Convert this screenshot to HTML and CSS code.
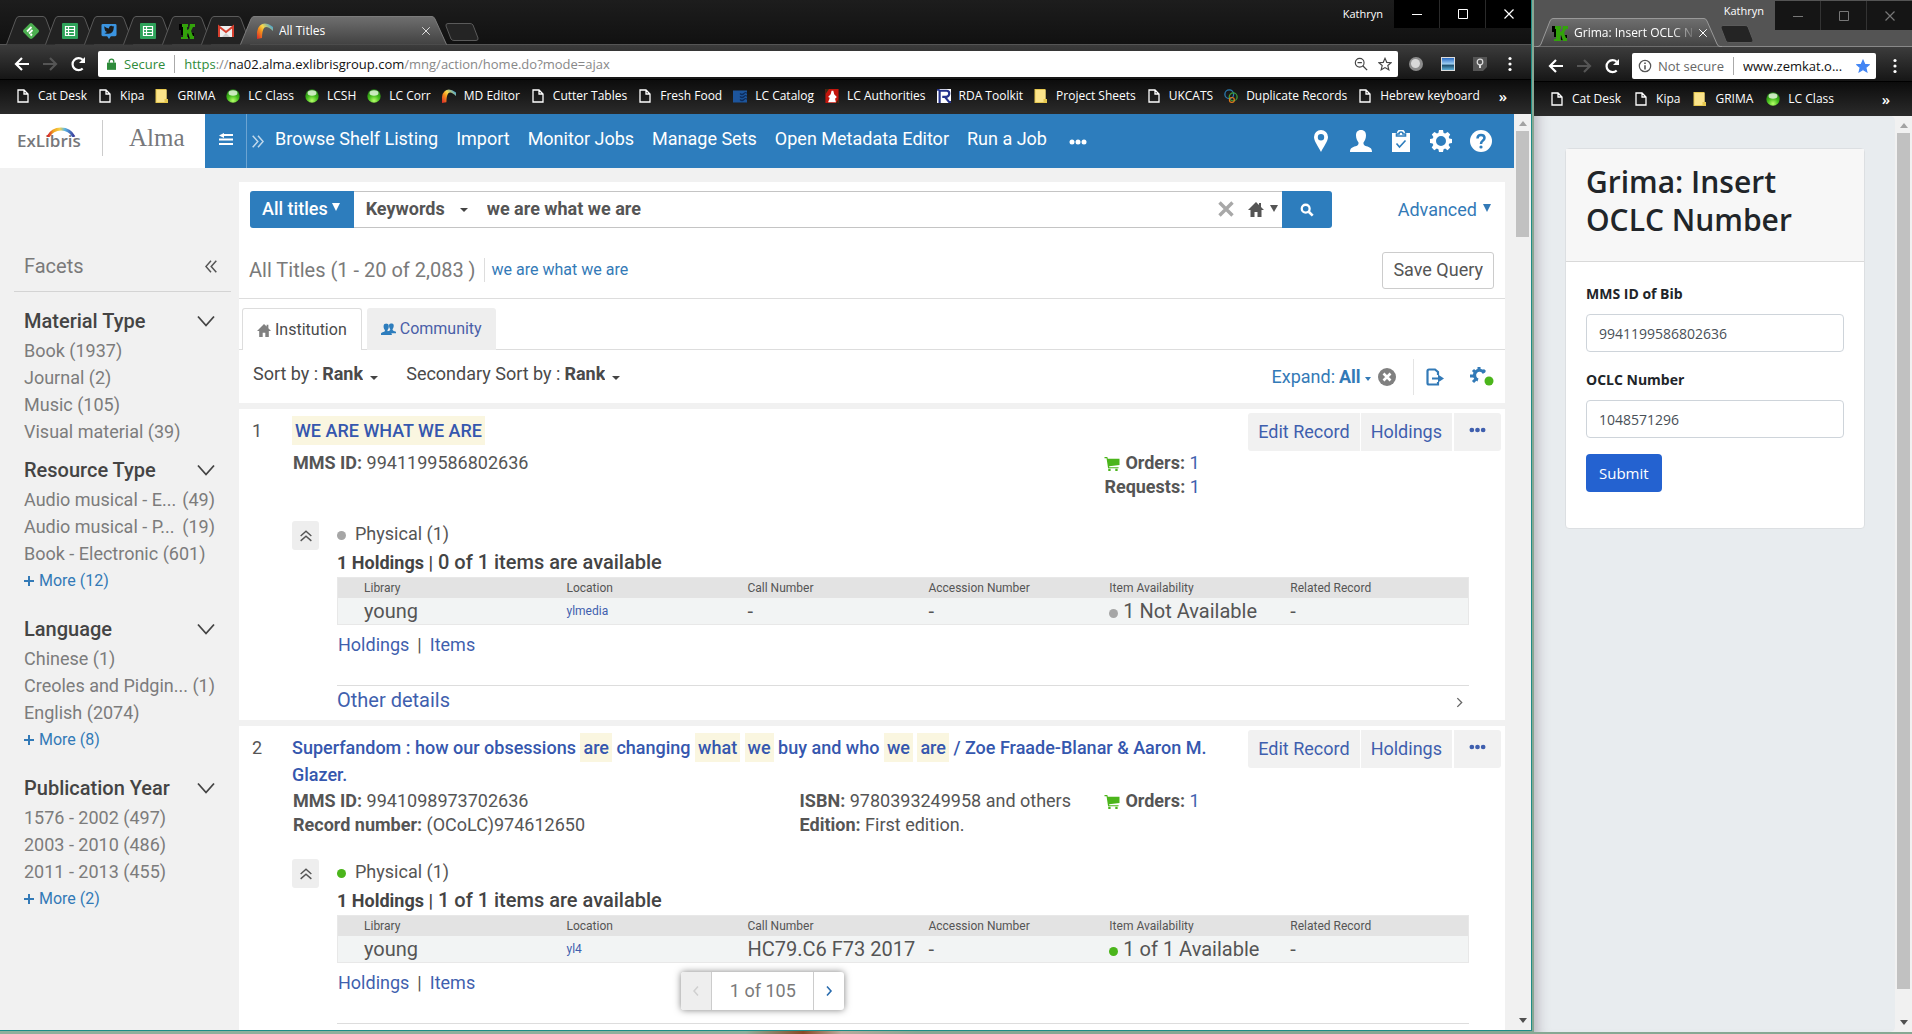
FILE: index.html
```html
<!DOCTYPE html>
<html lang="en">
<head>
<meta charset="utf-8">
<title>All Titles</title>
<link rel="stylesheet" href="styles.css">
</head>
<body>
<svg class="sprite" aria-hidden="true">
  <defs>
    <linearGradient id="tabfill" x1="0" y1="0" x2="0" y2="1"><stop offset="0" stop-color="#6f6f6f"/><stop offset="1" stop-color="#424242"/></linearGradient>
    <linearGradient id="rainbow" gradientUnits="userSpaceOnUse" x1="0" y1="16" x2="16" y2="3"><stop offset="0" stop-color="#d8232a"/><stop offset=".4" stop-color="#f6941b"/><stop offset=".6" stop-color="#f8d84a"/><stop offset="1" stop-color="#3aa0dc"/></linearGradient>
    <linearGradient id="bow"><stop offset="0" stop-color="#d8262c"/><stop offset=".2" stop-color="#f0a01e"/><stop offset=".45" stop-color="#f4d24a"/><stop offset=".65" stop-color="#58b4e4"/><stop offset="1" stop-color="#3b3c9c"/></linearGradient>
    <radialGradient id="orb" cx=".5" cy=".85" r=".8"><stop offset="0" stop-color="#b6ff6a"/><stop offset=".5" stop-color="#45bd1c"/><stop offset="1" stop-color="#1f7a10"/></radialGradient>
    <linearGradient id="shot" x1="0" y1="0" x2="0" y2="1"><stop offset="0" stop-color="#2b6cc4"/><stop offset=".5" stop-color="#9fd0f4"/><stop offset=".6" stop-color="#1e4f6e"/><stop offset="1" stop-color="#5fb0d8"/></linearGradient>
  </defs>
  <symbol id="tab-small" viewBox="0 0 50 29"><path d="M.5 28.5 10 3Q11 .5 13 .5H37Q39 .5 40 3L49.500 28.500" fill="#222" stroke="#5a5a5a"/></symbol>
  <symbol id="tab-left" viewBox="0 0 207 29"><path d="M.5 28.500 11 3Q12 .5 14 .5H192Q194 .5 195 3L206.500 28.500" fill="url(#tabfill)" stroke="#7c7c7c"/></symbol>
  <symbol id="tab-right" viewBox="0 0 186 29"><path d="M0 28.500H2Q4 28.500 5 26L14 3Q15 .5 17 .5H168Q170 .5 171 3L181 26Q182 28.500 184 28.500H186V29H0Z" fill="url(#tabfill)" stroke="#999"/></symbol>
  <symbol id="newtab" viewBox="0 0 34 18"><path d="M3 .5H25Q27 .5 28 2L33 15Q33.500 17.500 31 17.500H9Q7 17.500 6 16L1 3Q.5 .5 3 .5Z" fill="#242424" stroke="#5a5a5a"/></symbol>
  <symbol id="feedly" viewBox="0 0 16 16"><path d="M6.500 .7Q8 -.5 9.500 .7L15.500 6.700Q16.500 8 15.500 9.300L11 14Q9 16 8 16 7 16 5 14L.5 9.300Q-.5 8 .5 6.700Z" fill="#4caf50"/><path d="M4 8.500 8.500 4M6 10.500 9.500 7M7.500 12.500 9 11" stroke="#fff" stroke-width="1.800"/></symbol>
  <symbol id="sheets" viewBox="0 0 16 16"><rect width="16" height="16" rx="1" fill="#2fa35a"/><path d="M3.500 3.500h9v9h-9zM3.500 6.500h9M3.500 9.500h9M6.500 3.500v9" fill="none" stroke="#fff" stroke-width="1.200"/></symbol>
  <symbol id="tweet" viewBox="0 0 16 17"><path d="M1.500 1h13Q16 1 16 2.500v10Q16 14 14.500 14H10l-2 3-2-3H1.500Q0 14 0 12.500v-10Q0 1 1.500 1Z" fill="#3b94e0"/><path d="M3 3.500q2 2.200 5 2.300Q8 3 10.500 3q1 0 1.700.8L13.500 3.400 13 5q0 6-5.500 6.500-2.500.2-4.500-1 2 0 2.800-.9Q4 9 3.800 8 2.800 6 3 3.500Z" fill="#1c1c1c"/></symbol>
  <symbol id="kay" viewBox="0 0 16 16"><path d="M0 1h6v3H4v8H2V7H0zM9 10h6v5H9z" fill="#000"/><path d="M3 1h6v3H8v3l2-1 1-5h5v3h-2l-2 4 2 5h1v3h-4l-2-6-1 1v3h1v2H2v-2h2V4H3z" fill="#33a30b"/></symbol>
  <symbol id="gmail" viewBox="0 0 16 16"><path d="M1 3h14v11H1z" fill="#eee"/><path d="M1 14V3.500L8 9l7-5.500V14" fill="none" stroke="#d7402f" stroke-width="2"/><path d="M4 14 8 10l4 4z" fill="#ccc"/></symbol>
  <symbol id="arc" viewBox="0 0 16 16"><path d="M0 16Q-1 6 3 2.500 8-2 16 4V8Q10 2 7 5 5 8 5 15Z" fill="url(#rainbow)"/></symbol>
  <symbol id="page" viewBox="0 0 12 14"><path d="M1 1h6l4 4v8H1zM7 1v4h4" fill="none" stroke="#fff" stroke-width="1.300"/></symbol>
  <symbol id="note" viewBox="0 0 13 14"><path d="M0 0h11v10h1.500v4H0z" fill="#e6c84f"/><path d="M1 1h10v9H9v3H1z" fill="#fbe48b"/></symbol>
  <symbol id="ball" viewBox="0 0 14 14"><circle cx="7" cy="7" r="6.700" fill="url(#orb)"/><ellipse cx="7" cy="4" rx="4.500" ry="2.800" fill="#e4f7dc" opacity=".85"/></symbol>
  <symbol id="flag" viewBox="0 0 14 13"><path d="M0 1h14v12H0z" fill="#1d559c"/><path d="M7 4q2 2 4 0t3 0M7 7q2 2 4 0t3 0M7 10q2 2 4 0t3 0" fill="none" stroke="#0d2c5c" stroke-width="1.200"/></symbol>
  <symbol id="auth" viewBox="0 0 15 16"><path d="M0 0h15v16H0z" fill="#c3160d"/><path d="M0 0h4L0 6zM15 16v-5l-3 5z" fill="#3c2a10"/><path d="M7 2h2l1 4 3 3-2 2 1 4H3l2-5-2-1 3-3z" fill="#fff"/></symbol>
  <symbol id="rda" viewBox="0 0 16 16"><path d="M0 0h16v16H0z" fill="#fff"/><path d="M3 16V2h8q3 0 3 3t-3 4H6M9 9l5 6h2" fill="none" stroke="#25338c" stroke-width="2.500"/><path d="M0 0h3v2H0z" fill="#25338c"/></symbol>
  <symbol id="rings" viewBox="0 0 16 16"><circle cx="6" cy="6" r="5" fill="none" stroke="#2a7ab0" stroke-width="1.500"/><circle cx="10.500" cy="9" r="4.500" fill="none" stroke="#3d9b3a" stroke-width="1.500"/><circle cx="9" cy="12.500" r="2.800" fill="none" stroke="#e07b1c" stroke-width="1.400"/></symbol>
  <symbol id="back" viewBox="0 0 16 16"><path d="M15 8H2M8 2 2 8l6 6" fill="none" stroke="currentColor" stroke-width="2.200"/></symbol>
  <symbol id="reload" viewBox="0 0 16 16"><path d="M12.700 12.500A6 6 0 1 1 12.700 3.800" fill="none" stroke="#fff" stroke-width="2.200"/><path d="M15 1v6H9z" fill="#fff"/></symbol>
  <symbol id="kebab" viewBox="0 0 4 16"><circle cx="2" cy="2.500" r="1.600" fill="#fff"/><circle cx="2" cy="8" r="1.600" fill="#fff"/><circle cx="2" cy="13.500" r="1.600" fill="#fff"/></symbol>
  <symbol id="lock" viewBox="0 0 10 13"><path d="M0 5h10v8H0z" fill="#2e8b3a"/><path d="M2.500 5V3.500a2.500 2.500 0 0 1 5 0V5" fill="none" stroke="#2e8b3a" stroke-width="1.500"/></symbol>
  <symbol id="star" viewBox="0 0 16 16"><path d="m8 1.500 2 4.600 5 .4-3.800 3.300 1.200 4.900L8 12.100l-4.400 2.600 1.200-4.900L1 6.500l5-.4z" stroke="currentColor" stroke-width="1.300"/></symbol>
  <symbol id="win-min" viewBox="0 0 12 12"><path d="M1 6.500h10" stroke="currentColor"/></symbol>
  <symbol id="win-max" viewBox="0 0 12 12"><path d="M1.500 1.500h9v9h-9z" fill="none" stroke="currentColor"/></symbol>
  <symbol id="cross" viewBox="0 0 12 12"><path d="m1.500 1.500 9 9m0-9-9 9" stroke="currentColor" stroke-width="1.200"/></symbol>
  <symbol id="house" viewBox="0 0 16 16"><path d="M8 1 0 9h2.500v7h4v-5h3v5h4V9H16l-3-3V2h-2v2z" fill="currentColor"/></symbol>
  <symbol id="person" viewBox="0 0 22 22"><path d="M11 0c3.500 0 5 2.300 5 5.500S14.500 11 13.500 12.500c-.3 2 .5 3 3 3.800 3 1 5.500 1.500 5.500 5.700H0c0-4.200 2.500-4.700 5.500-5.700 2.500-.8 3.300-1.800 3-3.800C7.500 11 6 8.700 6 5.500S7.500 0 11 0Z" fill="currentColor"/></symbol>
  <symbol id="gear" viewBox="0 0 22 22"><path d="M9 0h4l.6 2.900 1.600.7L17.700 2l2.500 2.500-1.500 2.600.6 1.500L22 9v4l-2.700.6-.7 1.500 1.600 2.500-2.600 2.600-2.500-1.600-1.500.7L13 22H9l-.6-2.700-1.600-.7-2.500 1.600-2.600-2.600 1.600-2.500-.6-1.500L0 13V9l2.700-.5.700-1.500L1.800 4.500 4.400 1.900l2.500 1.600 1.500-.6zM11 6a5 5 0 1 0 0 10 5 5 0 0 0 0-10Z" fill="currentColor" fill-rule="evenodd"/></symbol>
  <symbol id="chevdown" viewBox="0 0 18 12"><path d="m1 1.500 8 9 8-9" fill="none" stroke="#444" stroke-width="1.800"/></symbol>
  <symbol id="dblleft" viewBox="0 0 12 13"><path d="M6 .7.900 6.500 6 12.300M11.300.7 6.200 6.500l5.100 5.800" fill="none" stroke="currentColor" stroke-width="1.500"/></symbol>
  <symbol id="cart" viewBox="0 0 16 16"><path d="M0 1h3l.5 2H16v6.500L5 11v1h10v1H3.800L2.200 2.500H0z" fill="#4bb51b"/><path d="M4 13.500h2.500V16H4zM11.500 13.500H14V16h-2.500z" fill="#4bb51b"/></symbol>
  <symbol id="dots" viewBox="0 0 18 6"><circle cx="3" cy="3" r="2.500" fill="currentColor"/><circle cx="9" cy="3" r="2.500" fill="currentColor"/><circle cx="15" cy="3" r="2.500" fill="currentColor"/></symbol>
  <symbol id="up" viewBox="0 0 8 5"><path d="M4 0 8 5H0z" fill="#a3a3a3"/></symbol>
  <symbol id="down" viewBox="0 0 8 5"><path d="M0 0h8L4 5z" fill="#505050"/></symbol>
</svg>

<div class="desktop">
<section class="window window-main">
  <header class="strip">
    <div class="tabs">
      <button class="tab" aria-label="Feedly"><svg class="tab-shape"><use href="#tab-small"/></svg><svg class="fav"><use href="#feedly"/></svg></button>
      <button class="tab" aria-label="Sheets"><svg class="tab-shape"><use href="#tab-small"/></svg><svg class="fav"><use href="#sheets"/></svg></button>
      <button class="tab" aria-label="TweetDeck"><svg class="tab-shape"><use href="#tab-small"/></svg><svg class="fav"><use href="#tweet"/></svg></button>
      <button class="tab" aria-label="Sheets"><svg class="tab-shape"><use href="#tab-small"/></svg><svg class="fav"><use href="#sheets"/></svg></button>
      <button class="tab" aria-label="Grima"><svg class="tab-shape"><use href="#tab-small"/></svg><svg class="fav"><use href="#kay"/></svg></button>
      <button class="tab" aria-label="Gmail"><svg class="tab-shape"><use href="#tab-small"/></svg><svg class="fav"><use href="#gmail"/></svg></button>
      <div class="tab tab-wide"><svg class="tab-shape"><use href="#tab-left"/></svg><svg class="fav"><use href="#arc"/></svg><span class="tab-title">All Titles</span><svg class="tab-close"><use href="#cross"/></svg></div>
      <button class="newtab" aria-label="New tab"><svg><use href="#newtab"/></svg></button>
    </div>
    <span class="profile">Kathryn</span>
    <div class="controls">
      <button aria-label="Minimize"><svg><use href="#win-min"/></svg></button><button aria-label="Maximize"><svg><use href="#win-max"/></svg></button><button aria-label="Close"><svg><use href="#cross"/></svg></button>
    </div>
  </header>
  <div class="toolbar">
    <button aria-label="Back"><svg><use href="#back"/></svg></button>
    <button aria-label="Forward" class="forward"><svg><use href="#back"/></svg></button>
    <button aria-label="Reload"><svg><use href="#reload"/></svg></button>
    <div class="omnibox">
      <svg class="lock"><use href="#lock"/></svg><span class="secure">Secure</span>
      <span class="url"><span class="scheme">https</span>://<span class="host">na02.alma.exlibrisgroup.com</span>/mng/action/home.do?mode=ajax</span>
      <svg class="omni-icon" viewBox="0 0 16 16"><circle cx="6.500" cy="6.500" r="5" fill="none" stroke="#444" stroke-width="1.300"/><path d="m10 10 5 5M4 6.500h5" stroke="#444" stroke-width="1.500"/></svg>
      <svg class="omni-icon star-empty"><use href="#star"/></svg>
    </div>
    <div class="extensions">
      <svg viewBox="0 0 16 16"><circle cx="8" cy="8" r="7" fill="#8c8c8c"/><circle cx="7.500" cy="7.500" r="4.500" fill="#d8d8d8"/></svg>
      <svg viewBox="0 0 16 16"><path d="M1 1h14v14H1z" fill="#ddd"/><path d="M2 2h12v12H2z" fill="url(#shot)"/></svg>
      <svg viewBox="0 0 16 16"><path d="M1 1h14v10l-4 4H1z" fill="#555"/><circle cx="8" cy="6" r="2.800" fill="none" stroke="#ddd" stroke-width="1.200"/><path d="M7 9h2v3H7z" fill="#ddd"/></svg>
    </div>
    <button aria-label="Menu" class="menu"><svg><use href="#kebab"/></svg></button>
  </div>
  <nav class="bookmarks">
    <a href="#"><svg><use href="#page"/></svg>Cat Desk</a>
    <a href="#"><svg><use href="#page"/></svg>Kipa</a>
    <a href="#"><svg><use href="#note"/></svg>GRIMA</a>
    <a href="#"><svg><use href="#ball"/></svg>LC Class</a>
    <a href="#"><svg><use href="#ball"/></svg>LCSH</a>
    <a href="#"><svg><use href="#ball"/></svg>LC Corr</a>
    <a href="#"><svg><use href="#arc"/></svg>MD Editor</a>
    <a href="#"><svg><use href="#page"/></svg>Cutter Tables</a>
    <a href="#"><svg><use href="#page"/></svg>Fresh Food</a>
    <a href="#"><svg><use href="#flag"/></svg>LC Catalog</a>
    <a href="#"><svg><use href="#auth"/></svg>LC Authorities</a>
    <a href="#"><svg><use href="#rda"/></svg>RDA Toolkit</a>
    <a href="#"><svg><use href="#note"/></svg>Project Sheets</a>
    <a href="#"><svg><use href="#page"/></svg>UKCATS</a>
    <a href="#"><svg><use href="#rings"/></svg>Duplicate Records</a>
    <a href="#"><svg><use href="#page"/></svg>Hebrew keyboard</a>
    <button class="overflow">»</button>
  </nav>

  <div class="viewport">
    <div class="alma">
      <header class="alma-head">
        <div class="brand">
          <div class="exlibris"><svg viewBox="0 0 30 10"><path d="M2 10Q6 2 15 2t13 8" fill="none" stroke="url(#bow)" stroke-width="3"/></svg><span>ExLibris</span></div>
          <span class="product">Alma</span>
        </div>
        <button class="head-menu" aria-label="Menu"><svg viewBox="0 0 14 12"><path d="M5 2h9M0 6.500h14M0 11h14" stroke="#fff" stroke-width="1.800"/><path d="M5 0v5L0 2.500z" fill="#fff"/></svg></button>
        <nav class="head-nav">
          <svg class="dblright"><use href="#dblleft"/></svg>
          <a href="#">Browse Shelf Listing</a><a href="#">Import</a><a href="#">Monitor Jobs</a><a href="#">Manage Sets</a><a href="#">Open Metadata Editor</a><a href="#">Run a Job</a>
          <button class="head-more" aria-label="More"><svg><use href="#dots"/></svg></button>
        </nav>
        <div class="head-icons">
          <button aria-label="Location"><svg viewBox="0 0 22 22"><path d="M11 0a7 7 0 0 1 7 7c0 4-4 9-7 15C8 16 4 11 4 7a7 7 0 0 1 7-7Zm0 4a3.200 3.200 0 1 0 0 6.400A3.200 3.200 0 0 0 11 4Z" fill="#fff" fill-rule="evenodd"/></svg></button>
          <button aria-label="User"><svg><use href="#person"/></svg></button>
          <button aria-label="Tasks"><svg viewBox="0 0 22 22"><path d="M2 3h5a4 3.500 0 0 1 8 0h5v19H2z" fill="#fff"/><path d="M6.500 6h9V4H13a2 2 0 0 0-4 0H6.500zM6.500 13.500l3 3.500 6-6.500" fill="none" stroke="#2d7dbd" stroke-width="1.600"/></svg></button>
          <button aria-label="Settings"><svg><use href="#gear"/></svg></button>
          <button aria-label="Help"><svg viewBox="0 0 22 22"><circle cx="11" cy="11" r="11" fill="#fff"/><path d="M7.500 8.500q0-3.500 3.500-3.500t3.500 3q0 1.500-1.800 2.700T11 14" fill="none" stroke="#2d7dbd" stroke-width="2.500"/><circle cx="11" cy="17" r="1.600" fill="#2d7dbd"/></svg></button>
        </div>
      </header>
      <div class="alma-body">
        <aside class="facets">
          <div class="facets-head"><span>Facets</span><button aria-label="Collapse"><svg><use href="#dblleft"/></svg></button></div>
          <section><h3>Material Type<svg><use href="#chevdown"/></svg></h3>
            <ul><li><a href="#">Book</a> (1937)</li><li><a href="#">Journal</a> (2)</li><li><a href="#">Music</a> (105)</li><li><a href="#">Visual material</a> (39)</li></ul></section>
          <section><h3>Resource Type<svg><use href="#chevdown"/></svg></h3>
            <ul><li class="cut"><a href="#">Audio musical - E...</a><span>(49)</span></li><li class="cut"><a href="#">Audio musical - P...</a><span>(19)</span></li><li><a href="#">Book - Electronic</a> (601)</li></ul>
            <a class="more" href="#"><svg viewBox="0 0 10 10"><path d="M5 0v10M0 5h10" stroke="currentColor" stroke-width="2"/></svg>More (12)</a></section>
          <section><h3>Language<svg><use href="#chevdown"/></svg></h3>
            <ul><li><a href="#">Chinese</a> (1)</li><li class="cut"><a href="#">Creoles and Pidgin...</a><span>(1)</span></li><li><a href="#">English</a> (2074)</li></ul>
            <a class="more" href="#"><svg viewBox="0 0 10 10"><path d="M5 0v10M0 5h10" stroke="currentColor" stroke-width="2"/></svg>More (8)</a></section>
          <section><h3>Publication Year<svg><use href="#chevdown"/></svg></h3>
            <ul><li><a href="#">1576 - 2002</a> (497)</li><li><a href="#">2003 - 2010</a> (486)</li><li><a href="#">2011 - 2013</a> (455)</li></ul>
            <a class="more" href="#"><svg viewBox="0 0 10 10"><path d="M5 0v10M0 5h10" stroke="currentColor" stroke-width="2"/></svg>More (2)</a></section>
        </aside>
        <main class="results">
          <div class="panel">
            <form class="search">
              <button type="button" class="scope">All titles<i class="tri"></i></button>
              <div class="search-box">
                <label class="pick"><select aria-label="Search field"><option>Keywords</option></select><i class="caret"></i></label>
                <input type="text" aria-label="Search" value="we are what we are">
                <button type="button" class="clear" aria-label="Clear"><svg viewBox="0 0 16 16"><path d="m1.500 1.500 13 13m0-13-13 13" stroke="#a8a8a8" stroke-width="3.400"/></svg></button>
                <button type="button" class="home" aria-label="Institution"><svg><use href="#house"/></svg><i class="tri"></i></button>
              </div>
              <button type="submit" class="go" aria-label="Search"><svg viewBox="0 0 16 16"><circle cx="6.500" cy="6.500" r="4.500" fill="none" stroke="#fff" stroke-width="2.600"/><path d="m10 10 4.500 4.500" stroke="#fff" stroke-width="3"/></svg></button>
              <a href="#" class="advanced">Advanced<i class="tri"></i></a>
            </form>
            <div class="summary">
              <h1>All Titles (1 - 20 of 2,083 )</h1><a href="#">we are what we are</a>
              <button class="save">Save Query</button>
            </div>
            <div class="result-tabs">
              <button class="current"><svg><use href="#house"/></svg>Institution</button>
              <button><svg viewBox="0 0 26 22"><use href="#person" width="18" height="18" x="9" y="1"/><use href="#person" width="20" height="21" x="-1" y="1"/></svg>Community</button>
            </div>
            <div class="sorting">
              <label class="pick">Sort by :<select><option>Rank</option></select><i class="caret low"></i></label>
              <label class="pick">Secondary Sort by :<select><option>Rank</option></select><i class="caret low"></i></label>
              <div class="tools">
                <label class="pick expand">Expand:<select><option>All</option></select><i class="caret"></i></label>
                <button aria-label="Clear"><svg viewBox="0 0 18 18"><circle cx="9" cy="9" r="9" fill="#808080"/><path d="m5.500 5.500 7 7m0-7-7 7" stroke="#fff" stroke-width="2.600"/></svg></button>
                <button aria-label="Export" class="export"><svg viewBox="0 0 18 18"><path d="M12 7V4L9 1.500H3q-1.500 0-1.500 1.500v12q0 1.500 1.500 1.500h9V14" fill="none" stroke="#337ab7" stroke-width="2.200"/><path d="M6 9.500h6V6.500l6 4-6 4v-3H6z" fill="#337ab7"/></svg></button>
                <button aria-label="Settings" class="cog"><svg viewBox="0 0 24 20"><path d="M8 13A5 5 0 1 1 14 6" fill="none" stroke="#337ab7" stroke-width="3.200"/><path d="M9 0v4M3 3l2.500 2.500M0 9h4M3 15l2.500-2.500M15 3l-2.500 2.500" stroke="#337ab7" stroke-width="3"/><circle cx="19" cy="14" r="4.500" fill="#4bb51b"/></svg></button>
              </div>
            </div>
          </div>

          <article class="record">
            <span class="num">1</span>
            <h2><a href="#"><mark>WE ARE WHAT WE ARE</mark></a></h2>
            <div class="actions"><button>Edit Record</button><button>Holdings</button><button aria-label="More actions" class="dots"><svg><use href="#dots"/></svg></button></div>
            <div class="meta">
              <div><p><b>MMS ID:</b> 9941199586802636</p></div>
              <div></div>
              <div><p><svg><use href="#cart"/></svg><b>Orders:</b> <a href="#">1</a></p><p><b>Requests:</b> <a href="#">1</a></p></div>
            </div>
            <div class="details">
              <button class="toggle" aria-label="Collapse"><svg><use href="#dblleft"/></svg></button>
              <div class="holdings">
                <p class="physical"><i class="dot"></i>Physical (1)</p>
                <p class="avail"><span>1 Holdings |</span> 0 of 1 items are available</p>
                <table>
                  <thead><tr><th>Library</th><th>Location</th><th>Call Number</th><th>Accession Number</th><th>Item Availability</th><th>Related Record</th></tr></thead>
                  <tbody><tr><td>young</td><td><a href="#">ylmedia</a></td><td>-</td><td>-</td><td><i class="dot"></i>1 Not Available</td><td>-</td></tr></tbody>
                </table>
                <p class="links"><a href="#">Holdings</a><span>|</span><a href="#">Items</a></p>
                <a class="other" href="#">Other details<svg viewBox="0 0 8 12"><path d="m1.500 1 5 5-5 5" fill="none" stroke="#666" stroke-width="1.500"/></svg></a>
              </div>
            </div>
          </article>

          <article class="record">
            <span class="num">2</span>
            <h2><a href="#">Superfandom : how our obsessions <mark>are</mark> changing <mark>what</mark> <mark>we</mark> buy and who <mark>we</mark> <mark>are</mark> / Zoe Fraade-Blanar &amp; Aaron M. Glazer.</a></h2>
            <div class="actions"><button>Edit Record</button><button>Holdings</button><button aria-label="More actions" class="dots"><svg><use href="#dots"/></svg></button></div>
            <div class="meta">
              <div><p><b>MMS ID:</b> 9941098973702636</p><p><b>Record number:</b> (OCoLC)974612650</p></div>
              <div><p><b>ISBN:</b> 9780393249958 and others</p><p><b>Edition:</b> First edition.</p></div>
              <div><p><svg><use href="#cart"/></svg><b>Orders:</b> <a href="#">1</a></p></div>
            </div>
            <div class="details">
              <button class="toggle" aria-label="Collapse"><svg><use href="#dblleft"/></svg></button>
              <div class="holdings">
                <p class="physical"><i class="dot on"></i>Physical (1)</p>
                <p class="avail"><span>1 Holdings |</span> 1 of 1 items are available</p>
                <table>
                  <thead><tr><th>Library</th><th>Location</th><th>Call Number</th><th>Accession Number</th><th>Item Availability</th><th>Related Record</th></tr></thead>
                  <tbody><tr><td>young</td><td><a href="#">yl4</a></td><td>HC79.C6 F73 2017</td><td>-</td><td><i class="dot on"></i>1 of 1 Available</td><td>-</td></tr></tbody>
                </table>
                <p class="links"><a href="#">Holdings</a><span>|</span><a href="#">Items</a></p>
                <div class="rule"></div>
              </div>
            </div>
          </article>
        </main>
      </div>
      <div class="pager">
        <button disabled aria-label="Previous"><svg viewBox="0 0 8 12"><path d="m6 1.500-4 4.500 4 4.500" fill="none" stroke="#d0d0d0" stroke-width="1.500"/></svg></button>
        <span>1 of 105</span>
        <button aria-label="Next"><svg viewBox="0 0 8 12"><path d="m2 1.500 4 4.500-4 4.500" fill="none" stroke="#2a6cae" stroke-width="1.600"/></svg></button>
      </div>
    </div>
    <div class="scrollbar"><svg><use href="#up"/></svg><div class="track"><div class="thumb"></div></div><svg><use href="#down"/></svg></div>
  </div>
</section>

<section class="window window-side">
  <header class="strip">
    <div class="tabs">
      <div class="tab tab-wide"><svg class="tab-shape"><use href="#tab-right"/></svg><svg class="fav"><use href="#kay"/></svg><span class="tab-title">Grima: Insert OCLC N</span><svg class="tab-close"><use href="#cross"/></svg></div>
      <button class="newtab" aria-label="New tab"><svg><use href="#newtab"/></svg></button>
    </div>
    <span class="profile">Kathryn</span>
    <div class="controls">
      <button aria-label="Minimize"><svg><use href="#win-min"/></svg></button><button aria-label="Maximize"><svg><use href="#win-max"/></svg></button><button aria-label="Close"><svg><use href="#cross"/></svg></button>
    </div>
  </header>
  <div class="toolbar">
    <button aria-label="Back"><svg><use href="#back"/></svg></button>
    <button aria-label="Forward" class="forward"><svg><use href="#back"/></svg></button>
    <button aria-label="Reload"><svg><use href="#reload"/></svg></button>
    <div class="omnibox">
      <svg class="omni-icon" viewBox="0 0 16 16"><circle cx="8" cy="8" r="6.500" fill="none" stroke="#555" stroke-width="1.400"/><path d="M8 7v5M8 4v1.800" stroke="#555" stroke-width="1.800"/></svg><span class="insecure">Not secure</span>
      <input type="text" aria-label="Address" value="www.zemkat.o...">
      <svg class="omni-icon star-full"><use href="#star"/></svg>
    </div>
    <button aria-label="Menu" class="menu"><svg><use href="#kebab"/></svg></button>
  </div>
  <nav class="bookmarks">
    <a href="#"><svg><use href="#page"/></svg>Cat Desk</a>
    <a href="#"><svg><use href="#page"/></svg>Kipa</a>
    <a href="#"><svg><use href="#note"/></svg>GRIMA</a>
    <a href="#"><svg><use href="#ball"/></svg>LC Class</a>
    <button class="overflow">»</button>
  </nav>
  <div class="viewport">
    <div class="grima">
      <div class="card">
        <h1>Grima: Insert OCLC Number</h1>
        <form>
          <label for="mms">MMS ID of Bib</label>
          <input id="mms" type="text" value="9941199586802636">
          <label for="oclc">OCLC Number</label>
          <input id="oclc" type="text" value="1048571296">
          <button type="submit">Submit</button>
        </form>
      </div>
    </div>
    <div class="scrollbar"><svg><use href="#up"/></svg><div class="track"><div class="thumb"></div></div><svg><use href="#down"/></svg></div>
  </div>
</section>
</div>
</body>
</html>
```
FILE: styles.css
```css
* { box-sizing: border-box; }
body { margin: 0; }
h1, h2, h3, p, ul { margin: 0; padding: 0; }
ul { list-style: none; }
a { color: inherit; text-decoration: none; }
button, input, select { font: inherit; color: inherit; border: 0; background: none; padding: 0; margin: 0; border-radius: 0; }
button { cursor: pointer; }
select { appearance: none; outline: 0; }
input { min-width: 0; outline: 0; }
svg { display: block; flex: none; }
.sprite { position: absolute; width: 0; height: 0; }

.desktop {
  display: grid;
  grid-template-columns: minmax(0, 1fr) 378px;
  gap: 2px;
  height: 100vh;
  overflow: hidden;
  background: linear-gradient(90deg, #8fb09c 0 39%, #8a4a26 42%, #b9aa9c 44%, #87a893 48%);
}

/* Browser windows */
.window { display: flex; flex-direction: column; min-height: 0; font: 12px/16px "Open Sans", "Noto Sans", sans-serif; color: #fff; }
.window-main { border: solid #1f8c87; border-width: 0 1px 1px 0; margin-bottom: 3px; }
.window-side { margin-bottom: 2px; }

.strip { display: flex; height: 45px; background: linear-gradient(#1d1d1d, #111); border-bottom: 1px solid #555; flex: none; }
.tabs { display: flex; align-items: flex-end; flex: 1; min-width: 0; padding-left: 6px; margin-bottom: -1px; }
.tab { position: relative; display: flex; align-items: center; justify-content: center; width: 50px; height: 29px; margin-right: -11px; }
.tab-shape { position: absolute; inset: 0; width: 100%; height: 100%; }
.fav { position: relative; width: 16px; height: 16px; }
.tab-wide { width: 207px; justify-content: flex-start; padding: 0 16px 0 17px; gap: 6px; margin-right: -2px; z-index: 1; }
.tab-title { position: relative; flex: 1; white-space: nowrap; overflow: hidden; }
.tab-close { position: relative; width: 10px; height: 10px; color: #ddd; }
.newtab { align-self: flex-end; margin-bottom: 4px; }
.newtab svg { width: 34px; height: 18px; }
.profile { margin: 5px 11px 0 0; font-size: 11px; line-height: 18px; }
.controls { display: flex; gap: 1px; height: 28px; background: #2a2a2a; }
.controls button { width: 45px; display: grid; place-items: center; background: #000; }
.controls svg { width: 12px; height: 12px; }

.toolbar { display: flex; align-items: center; height: 34px; padding: 4px 19px 0 14px; background: linear-gradient(#3c3c3c, #161616); flex: none; }
.toolbar > button { margin-right: 12px; }
.toolbar > button svg { width: 16px; height: 16px; }
.toolbar .forward { transform: scaleX(-1); color: #555; }
.toolbar .menu { margin: 0; }
.toolbar .menu svg { width: 4px; }
.omnibox { flex: 1; min-width: 0; display: flex; align-items: center; height: 26px; margin-right: 10px; padding: 0 6px 0 9px; background: #fff; border-radius: 2px; font-size: 13px; line-height: 18px; color: #888; }
.lock { width: 9px; height: 12px; margin-right: 8px; }
.secure { color: #2e8b3a; padding-right: 9px; border-right: 1px solid #aaa; }
.insecure { color: #666; padding-right: 9px; border-right: 1px solid #aaa; white-space: nowrap; }
.url { flex: 1; padding-left: 9px; white-space: nowrap; }
.scheme { color: #2e8b3a; }
.host { color: #111; }
.omnibox input { flex: 1; width: 0; padding-left: 9px; color: #111; }
.omni-icon { width: 14px; height: 14px; }
.star-empty { color: #444; fill: none; margin-left: 10px; }
.star-full { color: #4285f4; fill: #4285f4; }
.extensions { display: flex; gap: 16px; margin-right: 20px; }
.extensions svg { width: 16px; height: 16px; }

.bookmarks { display: flex; align-items: center; gap: 11px; height: 35px; padding: 0 24px 3px 16px; background: linear-gradient(#0c0c0c, #2b2b2b); border-top: 1px solid #000; white-space: nowrap; flex: none; }
.bookmarks a { display: flex; align-items: center; gap: 8px; }
.bookmarks svg { width: 14px; height: 14px; }
.overflow { margin-left: auto; font-size: 15px; font-weight: 600; }

.viewport { flex: 1; display: flex; min-height: 0; background: #f1f1f1; }
.scrollbar { width: 17px; display: flex; flex-direction: column; align-items: center; padding: 7px 2px; gap: 5px; background: #f1f1f1; flex: none; }
.scrollbar svg { width: 8px; height: 5px; }
.track { flex: 1; width: 100%; }
.thumb { height: 12%; background: #c1c1c1; }

/* Alma */
.alma { position: relative; flex: 1; min-width: 0; overflow: hidden; font: 18px/24px Roboto, sans-serif; color: #555; background: #f1f1f1; }
.alma-head { display: flex; height: 54px; background: #2d7dbd; color: #fff; }
.brand { display: flex; align-items: center; width: 205px; background: #fff; }
.exlibris { position: relative; width: 103px; height: 36px; padding: 9px 0 0 17px; border-right: 1px solid #ccc; color: #77787b; font: 600 17px/24px "Open Sans", sans-serif; margin-top: -6px; }
.exlibris svg { position: absolute; left: 46px; top: 7px; width: 30px; height: 10px; }
.product { margin: -6px 0 0 26px; font: 25px/30px "Liberation Serif", serif; color: #77787b; }
.head-menu { width: 42px; border-right: 1px solid #6ca4d2; display: grid; place-items: center; padding-bottom: 4px; }
.head-menu svg { width: 14px; height: 12px; }
.head-nav { display: flex; align-items: center; gap: 18px; flex: 1; padding: 0 0 4px 5px; white-space: nowrap; }
.dblright { width: 12px; height: 13px; transform: scaleX(-1); opacity: .7; margin: 4px -7px 0 0; }
.head-more { margin: 6px 0 0 4px; }
.head-more svg { width: 18px; height: 6px; }
.head-icons { display: flex; align-items: center; gap: 18px; padding-right: 22px; }
.head-icons svg { width: 22px; height: 22px; }

.alma-body { display: flex; }
.facets { width: 239px; flex: none; padding: 83px 8px 0 14px; color: #7c7c7c; }
.facets-head { display: flex; justify-content: space-between; align-items: center; height: 41px; padding: 0 14px 10px 10px; margin-bottom: 12px; border-bottom: 1px solid #d4d4d4; font-size: 20px; color: #7a7a7a; }
.facets-head svg { width: 12px; height: 13px; color: #555; }
.facets section { padding: 0 16px 0 10px; margin-bottom: 8px; }
.facets h3 { display: flex; justify-content: space-between; align-items: center; height: 33px; font-size: 20px; font-weight: 500; color: #444; white-space: nowrap; }
.facets h3 svg { width: 18px; height: 12px; }
.facets li { line-height: 27px; white-space: nowrap; }
.cut { display: flex; justify-content: space-between; }
.more { display: flex; align-items: center; gap: 5px; line-height: 27px; padding-bottom: 10px; color: #337ab7; font-size: 16px; }
.more svg { width: 10px; height: 10px; }

.results { flex: 1; min-width: 0; margin: 14px 9px 0 0; }
.panel { background: #fff; margin-bottom: 6px; }
.tri { display: inline-block; border: solid transparent; border-width: 8px 4px 0; border-top-color: currentColor; }
.caret { display: inline-block; border: solid transparent; border-width: 4px 4px 0; border-top-color: #444; margin-top: 3px; }
.caret.low { margin-top: 8px; }
.pick { display: flex; align-items: center; gap: 8px; }
.pick select { font-weight: 700; }

.search { display: flex; align-items: center; padding: 9px 14px 0 11px; }
.scope { display: flex; align-items: center; gap: 4px; height: 37px; padding: 0 14px 2px 12px; border-radius: 3px 0 0 3px; background: #2d7dbd; color: #fff; font-weight: 500; white-space: nowrap; }
.scope .tri { margin-top: -4px; }
.search-box { flex: 1; display: flex; align-items: center; height: 37px; border: solid #c4c4c4; border-width: 1px 0; padding: 0 4px 2px 12px; color: #555; }
.search-box .pick { gap: 14px; }
.search-box input { flex: 1; margin-left: 19px; font-weight: 700; }
.clear { margin-right: 14px; }
.clear svg, .home svg { width: 16px; height: 16px; }
.home { display: flex; align-items: center; gap: 6px; }
.home .tri { border-top-width: 7px; }
.go { display: grid; place-items: center; width: 50px; height: 37px; border-radius: 0 3px 3px 0; background: #2d7dbd; }
.go svg { width: 14px; height: 14px; }
.advanced { display: flex; align-items: center; gap: 6px; margin-left: 66px; color: #337ab7; }
.advanced .tri { margin-top: -4px; }

.summary { display: flex; align-items: center; height: 71px; padding: 14px 11px 0 10px; border-bottom: 1px solid #ddd; }
.summary h1 { font-size: 20px; font-weight: 400; color: #7a7a7a; padding-right: 8px; border-right: 1px solid #ddd; }
.summary a { margin-left: 7px; font-size: 16px; color: #337ab7; }
.save { margin-left: auto; height: 37px; padding: 0 10px; border: 1px solid #ccc; border-radius: 3px; }

.result-tabs { display: flex; align-items: flex-end; gap: 5px; height: 51px; padding-left: 3px; box-shadow: inset 0 -1px #ddd; font-size: 16px; }
.result-tabs button { display: flex; align-items: center; gap: 4px; height: 42px; padding: 0 14px; border-radius: 3px 3px 0 0; background: #eee; color: #4a5fa8; }
.result-tabs button:not(.current) svg { width: 15px; color: #2d7dbd; }
.result-tabs .current { background: #fff; color: #4a4a4a; border: solid #ddd; border-width: 1px 1px 0; }
.result-tabs svg { width: 14px; height: 14px; color: #808080; }

.sorting { display: flex; align-items: center; gap: 28px; height: 53px; padding: 0 11px 6px 14px; color: #4a4a4a; }
.sorting .pick { gap: 4px; }
.sorting .caret { margin-left: 3px; }
.tools { display: flex; align-items: center; margin: 7px 0 0 auto; }
.tools .expand { color: #337ab7; }
.sorting .expand .caret { border-top-color: #337ab7; border-width: 4px 3px 0; margin-left: 0; }
.tools button svg { width: 18px; height: 18px; }
.tools button { margin-left: 7px; }
.tools .export { margin-left: 17px; padding-left: 12px; height: 36px; border-left: 1px solid #e4e4e4; }
.tools .cog { margin-left: 26px; }
.tools .cog svg { width: 24px; height: 20px; }

.record { display: grid; grid-template-columns: 40px minmax(0, 1fr) auto; background: #fff; margin-bottom: 6px; padding: 4px 4px 6px 13px; }
.num { padding-top: 6px; }
.record h2 { padding: 4px 16px 0 0; min-height: 37px; font-size: 18px; line-height: 27px; font-weight: 500; color: #3557ae; }
mark { background: #faf6e0; color: inherit; padding: 4px 3px; }
.record a { color: #3f5fae; }
.record h2 a { color: inherit; }
.actions { display: flex; gap: 1px; height: 38px; grid-column: 3; grid-row: 1 / 3; }
.actions button { padding: 0 10px; background: #f1f1f1; color: #3f5fae; }
.actions button:first-child { border-radius: 3px 0 0 3px; }
.actions .dots { width: 47px; margin-left: 1px; padding: 0 15px 5px; border-radius: 0 3px 3px 0; }
.dots svg { width: 17px; height: 6px; }
.meta { grid-column: 2; display: grid; grid-template-columns: 507fr 305fr 144fr; min-height: 48px; padding-left: 1px; margin-top: 1px; white-space: nowrap; }
.meta b { font-weight: 700; color: #555; }
.meta p svg { display: inline-block; width: 16px; height: 15px; vertical-align: -2px; margin-right: 5px; }
.details { grid-column: 2 / -1; display: flex; gap: 18px; margin: 21px 32px 0 0; }
.toggle { display: grid; place-items: center; width: 27px; height: 29px; margin-top: 1px; border-radius: 3px; background: #eee; flex: none; }
.toggle svg { width: 12px; height: 12px; transform: rotate(90deg); }
.holdings { flex: 1; min-width: 0; }
.dot { display: inline-block; width: 9px; height: 9px; border-radius: 50%; background: #a6a6a6; margin-right: 5px; }
.dot.on { background: #4bb51b; }
.physical { line-height: 28px; }
.physical .dot { margin-right: 9px; }
.avail { font-size: 20px; line-height: 29px; font-weight: 500; color: #444; }
.avail span { font-size: 18px; font-weight: 700; }
.holdings table { width: 100%; table-layout: fixed; border-collapse: collapse; text-align: left; border: 1px solid #e8e8e8; }
.holdings th { height: 20px; padding: 0; background: #e3e3e3; font-size: 12px; line-height: 18px; font-weight: 400; width: 16%; }
.holdings th:first-child { width: 229px; }
.holdings th:last-child { width: auto; }
.holdings td { height: 27px; padding: 0; background: #f2f4f4; font-size: 20px; line-height: 26px; white-space: nowrap; }
.holdings td a { display: block; font-size: 12px; line-height: 22px; }
.holdings th:first-child, .holdings td:first-child { padding-left: 26px; }
.links { line-height: 28px; padding: 6px 0 26px 1px; }
.links span { margin: 0 8px; }
.other { display: flex; align-items: center; justify-content: space-between; border-top: 1px solid #ddd; font-size: 20px; line-height: 28px; padding-right: 6px; }
.other svg { width: 7px; height: 11px; margin-top: 4px; }
.rule { border-top: 1px solid #ddd; height: 28px; }

.pager { position: absolute; left: 45%; bottom: 20px; display: flex; height: 38px; background: #fff; border-radius: 3px; box-shadow: 0 0 7px rgba(0, 0, 0, .5); overflow: hidden; color: #7a7a7a; }
.pager button { width: 30px; display: grid; place-items: center; }
.pager button:disabled { background: #eee; }
.pager svg { width: 8px; height: 12px; }
.pager span { display: grid; place-items: center; width: 103px; border: solid #ccc; border-width: 0 1px; }

/* Side window */
.window-side .strip { height: 47px; background: #545454; border-color: #888; }
.window-side .tab-wide { width: 186px; padding: 0 14px 0 16px; gap: 6px; }
.window-side .tabs { padding-left: 2px; }
.window-side .tab-title { mask-image: linear-gradient(90deg, #000 82%, rgba(0, 0, 0, .2)); }
.window-side .tab-close { color: #fff; }
.window-side .profile { margin-top: 2px; }
.window-side .controls { margin-top: 1px; height: 29px; background: #333; color: #777; }
.window-side .controls button { background: #151515; }
.window-side .toolbar { padding-right: 15px; }
.window-side .omnibox { padding: 0 6px; margin-right: 17px; }
.window-side .insecure { margin-left: 6px; }
.window-side .bookmarks { gap: 13px; padding: 0 22px 0 16px; }
.grima { flex: 1; min-width: 0; padding: 32px 30px 32px 31px; border-radius: 0 5px 5px 0; background: #e8ecef; box-shadow: inset 14px 0 14px -12px rgba(60, 40, 60, .35); font: 14px/20px "Open Sans", "Noto Sans", sans-serif; color: #212529; }
.card { border: 1px solid #dcdfe2; border-radius: 4px; background: #fff; }
.card h1 { padding: 14px 16px 22px 20px; background: #f7f7f7; border-bottom: 1px solid #d9d9d9; font-size: 30px; line-height: 38px; font-weight: 600; }
.card form { display: flex; flex-direction: column; align-items: flex-start; padding: 22px 20px 36px; }
.card label { font-weight: 700; margin-bottom: 10px; }
.card input { width: 100%; height: 38px; padding: 0 12px; margin-bottom: 18px; border: 1px solid #ced4da; border-radius: 4px; color: #495057; }
.card button { height: 38px; padding: 0 13px; margin-top: -2px; border-radius: 4px; background: #2462d0; color: #fff; font-size: 15px; }
.window-side .thumb { height: 97%; }
```
